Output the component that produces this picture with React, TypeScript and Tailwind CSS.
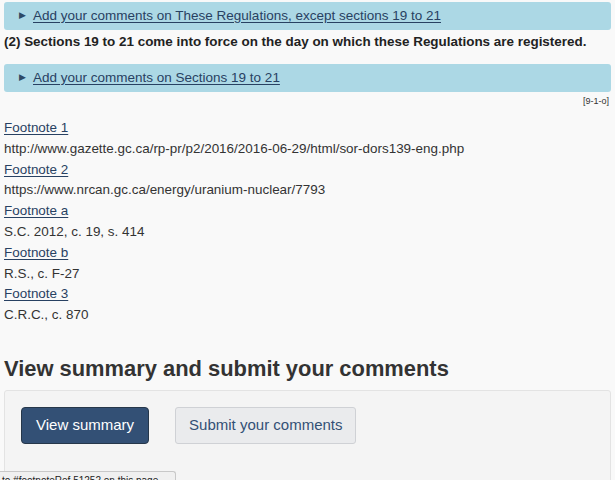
import React from 'react';

const footnotes = [
  { label: 'Footnote 1', text: 'http://www.gazette.gc.ca/rp-pr/p2/2016/2016-06-29/html/sor-dors139-eng.php' },
  { label: 'Footnote 2', text: 'https://www.nrcan.gc.ca/energy/uranium-nuclear/7793' },
  { label: 'Footnote a', text: 'S.C. 2012, c. 19, s. 414' },
  { label: 'Footnote b', text: 'R.S., c. F-27' },
  { label: 'Footnote 3', text: 'C.R.C., c. 870' },
];

function CommentBar({ children }: { children: React.ReactNode }) {
  return (
    <div className="mx-1 flex h-[28px] items-center rounded-[3px] bg-[#acd8e5] pl-[15px]">
      <span className="mr-[7px] text-[9px] text-[#2e4a66]">▶</span>
      <a href="#" className="text-[13.5px] text-[#284162] underline underline-offset-[2px]">
        {children}
      </a>
    </div>
  );
}

export default function App() {
  return (
    <div className="relative h-[480px] w-[615px] overflow-hidden bg-[#f9f9f9] font-['Liberation_Sans',Arial,sans-serif] text-[#333]">
      <div className="pt-[2px]">
        <CommentBar>Add your comments on These Regulations, except sections 19 to 21</CommentBar>
        <p className="mx-1 mt-[2px] text-[13.45px] font-bold leading-[20px] text-[#222]">
          (2) Sections 19 to 21 come into force on the day on which these Regulations are registered.
        </p>
        <div className="mt-[12px]">
          <CommentBar>Add your comments on Sections 19 to 21</CommentBar>
        </div>
        <div className="mr-[6px] mt-[3px] text-right text-[9px] leading-[12px] text-[#333]">[9-1-o]</div>

        <dl className="mx-1 mt-[11px] text-[13.45px] leading-[20.8px]">
          {footnotes.map((f) => (
            <div key={f.label}>
              <dt>
                <a href="#" className="text-[#284162] underline underline-offset-[2px]">
                  {f.label}
                </a>
              </dt>
              <dd>{f.text}</dd>
            </div>
          ))}
        </dl>

        <h2 className="mx-1 mt-[29px] text-[21.9px] font-bold leading-[28px] text-[#333]">
          View summary and submit your comments
        </h2>
        <div className="mx-1 mt-[7px] h-[120px] rounded-[3px] border border-[#e3e3e3] bg-[#f4f4f4] pl-[16px] pt-[16px]">
          <div className="flex gap-[26px]">
            <button className="h-[37px] rounded-[4px] border border-[#26374a] bg-[#335075] px-[14px] text-[15px] text-white">
              View summary
            </button>
            <button className="h-[37px] rounded-[3px] border border-[#cfd1d5] bg-[#eaebed] px-[13px] text-[15px] text-[#335075]">
              Submit your comments
            </button>
          </div>
        </div>
      </div>

      <div className="absolute bottom-0 left-0 h-[9px] w-[176px] overflow-hidden rounded-tr-[3px] border-r border-t border-[#c8c8c8] bg-[#f0f0f0] pl-[2px] pt-[3px] text-[10px] leading-[12px] text-[#222]">
        to #footnoteRef.51252 on this page
      </div>
    </div>
  );
}
